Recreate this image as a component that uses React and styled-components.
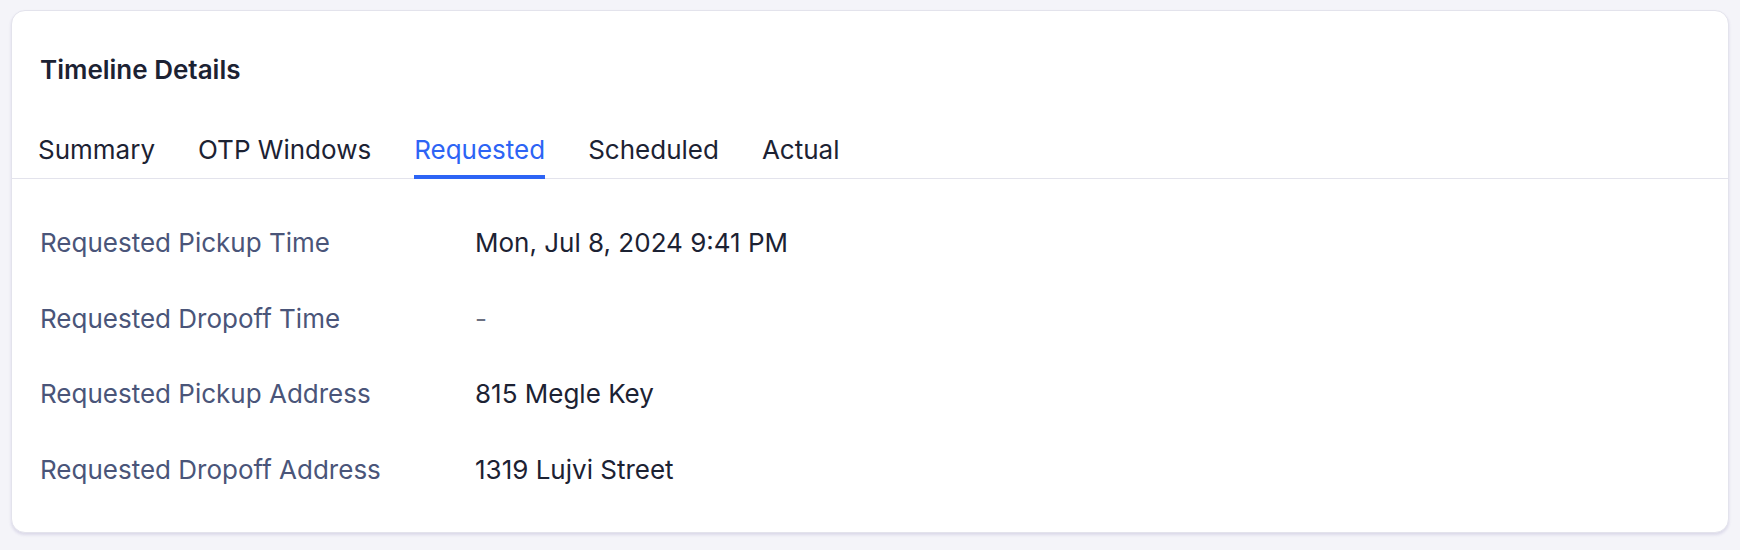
import React from 'react';
import styled, { createGlobalStyle } from 'styled-components';

const GlobalStyle = createGlobalStyle`
  html, body {
    margin: 0;
    padding: 0;
    background: #f4f4f9;
    font-family: Inter, "Noto Sans", sans-serif;
  }
`;

const tabs = ['Summary', 'OTP Windows', 'Requested', 'Scheduled', 'Actual'];

const rows = [
  { label: 'Requested Pickup Time', value: 'Mon, Jul 8, 2024 9:41 PM' },
  { label: 'Requested Dropoff Time', value: '-', muted: true },
  { label: 'Requested Pickup Address', value: '815 Megle Key' },
  { label: 'Requested Dropoff Address', value: '1319 Lujvi Street' },
];

const TimelineDetails = () => {
  return (
    <Page>
      <Card>
        <Header>
          <Title>Timeline Details</Title>
        </Header>
        <TabList>
          {tabs.map((tab) => (
            <Tab key={tab} $active={tab === 'Requested'}>
              {tab}
            </Tab>
          ))}
        </TabList>
        <Body>
          {rows.map((row) => (
            <Row key={row.label}>
              <Label>{row.label}</Label>
              <Value $muted={row.muted}>{row.value}</Value>
            </Row>
          ))}
        </Body>
      </Card>
    </Page>
  );
};

const Page = styled.div`
  padding: 10px 11px 18px 11px;
`;

const Card = styled.div`
  background: #ffffff;
  border: 1px solid #e3e3ec;
  border-radius: 14px;
  box-shadow: 0 2px 3px rgba(70, 60, 140, 0.14);
  overflow: hidden;
`;

const Header = styled.div`
  padding: 39px 28px 0 28px;
`;

const Title = styled.h2`
  margin: 0;
  font-size: 26px;
  line-height: 39px;
  font-weight: 600;
  color: #1c2233;
`;

const TabList = styled.div`
  display: flex;
  gap: 43px;
  margin-top: 41px;
  padding: 0 26px;
  border-bottom: 1px solid #e3e3ec;
`;

const Tab = styled.div`
  font-size: 26px;
  line-height: 39px;
  padding-bottom: 6px;
  margin-bottom: -1px;
  color: ${(p) => (p.$active ? '#2d64f5' : '#1c2233')};
  border-bottom: 4px solid ${(p) => (p.$active ? '#2d64f5' : 'transparent')};
  cursor: pointer;
`;

const Body = styled.div`
  display: flex;
  flex-direction: column;
  gap: 36.5px;
  padding: 44px 28px 43px 28px;
`;

const Row = styled.div`
  display: grid;
  grid-template-columns: 435px 1fr;
`;

const Label = styled.div`
  font-size: 26px;
  line-height: 39px;
  color: #4a5579;
`;

const Value = styled.div`
  font-size: 26px;
  line-height: 39px;
  color: ${(p) => (p.$muted ? '#6b7080' : '#1c2233')};
`;

export default function App() {
  return (
    <>
      <GlobalStyle />
      <TimelineDetails />
    </>
  );
}
